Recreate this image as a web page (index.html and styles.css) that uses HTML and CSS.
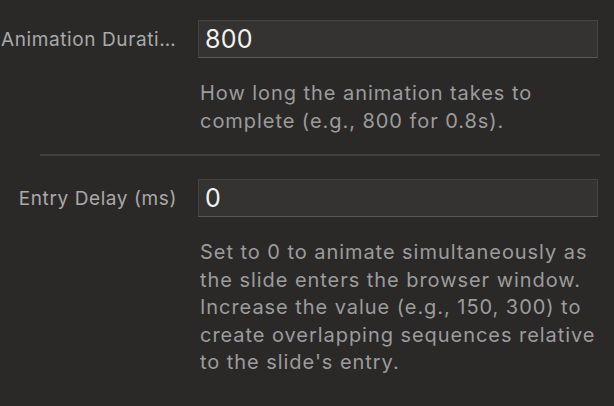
FILE: index.html
```html
<!DOCTYPE html>
<html lang="en">
<head>
    <meta charset="UTF-8">
    <meta name="viewport" content="width=device-width, initial-scale=1.0">
    <title>Animation Settings</title>
    <link rel="stylesheet" href="styles.css">
</head>
<body>

    <div class="settings">
        <div class="field">
            <label class="field-label" for="duration">Animation Duration (ms)</label>
            <input class="field-input" id="duration" type="text" value="800">
            <p class="field-help">How long the animation takes to complete (e.g., 800 for 0.8s).</p>
        </div>

        <hr class="divider">

        <div class="field">
            <label class="field-label" for="delay">Entry Delay (ms)</label>
            <input class="field-input" id="delay" type="text" value="0">
            <p class="field-help">Set to 0 to animate simultaneously as the slide enters the browser window. Increase the value (e.g., 150, 300) to create overlapping sequences relative to the slide's entry.</p>
        </div>
    </div>

</body>
</html>
```

FILE: styles.css
```css
body {
    font-family: 'Inter', 'Noto Sans', sans-serif;
    background-color: #2a2928;
    color: #f2f2f2;
    margin: 0;
    padding: 0;
}

.settings {
    padding-top: 20px;
}

.field {
    display: grid;
    grid-template-columns: 176px 400px;
    column-gap: 21px;
    padding-left: 1px;
}

.field-label {
    align-self: center;
    text-align: right;
    font-size: 19px;
    letter-spacing: 0.6px;
    color: #a9a9a9;
    white-space: nowrap;
    overflow: hidden;
    text-overflow: ellipsis;
}

.field-input {
    box-sizing: border-box;
    height: 38px;
    width: 400px;
    margin: 0;
    padding: 0 6px;
    font-family: inherit;
    font-size: 25px;
    letter-spacing: 0.3px;
    color: #f2f2f2;
    background: #343331;
    border: 1px solid #454442;
    border-bottom-color: #5a5958;
    border-radius: 0;
    outline: none;
}

.field-help {
    grid-column: 2;
    margin: 22px 0 0;
    padding-left: 2px;
    font-size: 20px;
    line-height: 27.5px;
    letter-spacing: 0.95px;
    color: #9c9c9c;
}

.divider {
    margin: 19px 14px 23px 40px;
    height: 2px;
    border: none;
    background: #414040;
}
```
